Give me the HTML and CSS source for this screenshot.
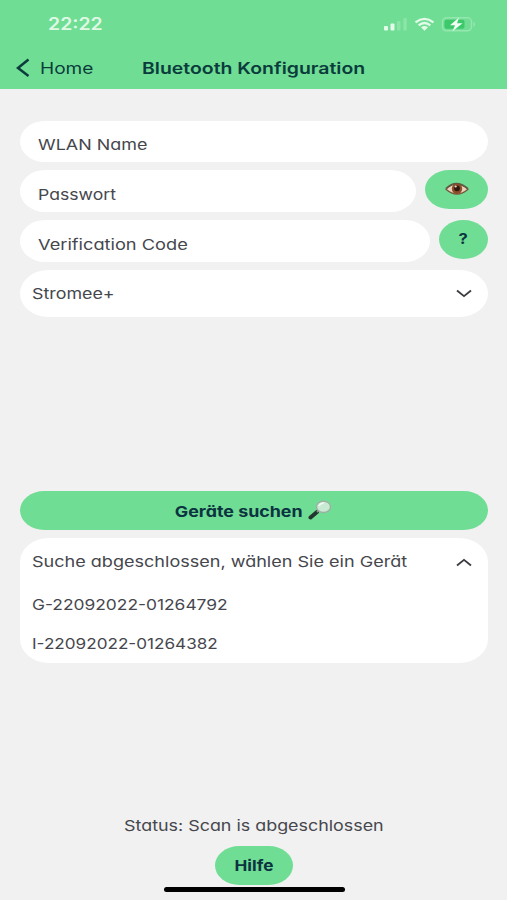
FILE: index.html
```html
<!DOCTYPE html>
<html lang="de">
<head>
<meta charset="utf-8">
<title>Bluetooth Konfiguration</title>
<link rel="stylesheet" href="styles.css">
</head>
<body>
<header class="top">
  <div class="statusbar">
    <span class="wide clock">22:22</span>
    <svg class="indicators" width="94" height="20" viewBox="0 0 94 20">
      <g fill="#e4fbe9"><rect x="1" y="12" width="4" height="4.500" rx="1"/><rect x="7.500" y="9.500" width="4" height="7" rx="1"/></g>
      <g fill="#8ae5a7"><rect x="14" y="7" width="3.500" height="9.500" rx="1"/><rect x="20.300" y="4" width="3.500" height="12.500" rx="1"/></g>
      <g fill="none" stroke="#e4fbe9" stroke-width="2.300"><path d="M32.500 8.300Q41.500 1.500 50.500 8.300"/><path d="M35.700 11.300Q41.500 6.800 47.300 11.300"/></g>
      <path d="M38 13.200Q41.500 10.600 45 13.200L41.500 16.700Z" fill="#e4fbe9"/>
      <rect x="59.500" y="3.800" width="29" height="13" rx="4" fill="none" stroke="#94e7ad" stroke-width="1.500"/>
      <path d="M90.500 7.500Q94 10.300 90.500 13Z" fill="#94e7ad"/>
      <rect x="61.500" y="5.800" width="20" height="9" rx="2" fill="#3dc96b"/>
      <path d="M76 3.500L67 11.200H72L69.500 17.300L79.500 9.200H74Z" fill="#effdf2"/>
    </svg>
  </div>
  <nav class="nav">
    <svg class="back" width="14" height="20" viewBox="0 0 14 20"><path d="M12.500 1.500L2 10L12.500 18" fill="none" stroke="#0b3c3c" stroke-width="2.500"/></svg>
    <span class="wide home">Home</span>
    <h1 class="wide title">Bluetooth Konfiguration</h1>
  </nav>
</header>
<main class="content">
  <div class="row"><div class="field"><span class="wide t-wlan">WLAN Name</span></div></div>
  <div class="row"><div class="field"><span class="wide t-pass">Passwort</span></div>
    <button class="btn eye">
      <svg width="24" height="16" viewBox="0 0 24 16">
        <path d="M1 8.200Q11-2 23 8.200Q12 18 1 8.200Z" fill="#e9d2bb" stroke="#75543d" stroke-width="1.200"/>
        <path d="M1 7.500Q11-2.500 23 7.500" fill="none" stroke="#5d5b45" stroke-width="1.500"/>
        <circle cx="12" cy="7.700" r="5.200" fill="#8b4c2a"/><circle cx="12" cy="7.300" r="2.900" fill="#30180f"/><circle cx="10.700" cy="5.500" r="1.100" fill="#e8ddd5"/>
      </svg>
    </button>
  </div>
  <div class="row"><div class="field"><span class="wide t-code">Verification Code</span></div>
    <button class="btn help"><span class="wide t-q">?</span></button>
  </div>
  <div class="select">
    <span class="wide t-stromee">Stromee+</span>
    <svg class="chevron" width="16" height="9" viewBox="0 0 16 9"><path d="M1 1.500L8 7.200L15 1.500" fill="none" stroke="#3a3b40" stroke-width="1.800"/></svg>
  </div>
  <button class="btn search">
    <span class="wide t-search">Geräte suchen</span>
    <svg class="lens" width="24" height="20" viewBox="0 0 24 20">
      <path d="M2.500 17.500L9 12" stroke="#24352e" stroke-width="4" stroke-linecap="round"/>
      <path d="M9 12L11.500 10" stroke="#87938c" stroke-width="2"/>
      <ellipse cx="15.500" cy="6.800" rx="7" ry="5.700" fill="#c8e9d2" stroke="#9eaca3" stroke-width="1.300"/>
      <path d="M11 6Q12.500 3 16 3" fill="none" stroke="#eefaf1" stroke-width="1.500"/>
    </svg>
  </button>
  <section class="devices">
    <div class="devices-head">
      <span class="wide t-done">Suche abgeschlossen, wählen Sie ein Gerät</span>
      <svg class="chevron" width="16" height="9" viewBox="0 0 16 9"><path d="M1 7.500L8 1.800L15 7.500" fill="none" stroke="#3a3b40" stroke-width="1.800"/></svg>
    </div>
    <div class="device"><span class="wide t-g">G-22092022-01264792</span></div>
    <div class="device"><span class="wide t-i">I-22092022-01264382</span></div>
  </section>
</main>
<footer class="foot">
  <p class="status"><span class="wide t-status">Status: Scan is abgeschlossen</span></p>
  <button class="btn hilfe"><span class="wide t-hilfe">Hilfe</span></button>
  <div class="home-bar"></div>
</footer>
</body>
</html>
```
FILE: styles.css
```css
* { box-sizing: border-box; }
body {
  margin: 0;
  width: 507px;
  height: 900px;
  overflow: hidden;
  display: flex;
  flex-direction: column;
  background: #f1f1f1;
  color: #46474d;
  font: 15px/20px Inter, "Liberation Sans", sans-serif;
  font-feature-settings: "cv11";
}
.wide {
  display: inline-block;
  white-space: nowrap;
  transform-origin: left center;
  transform: scaleX(var(--sx, 1.2));
}
.top { height: 89px; background: #70dd95; color: #0b3c3c; }
.statusbar {
  height: 48px;
  padding: 14px 30px 0 48px;
  display: flex;
  justify-content: space-between;
}
.clock { color: #dff9e3; font-size: 17px; font-weight: 600; line-height: 21px; font-feature-settings: normal; --sx: 1.145; }
.nav { height: 40px; display: flex; align-items: center; padding-left: 16px; }
.home { margin-left: 10px; width: 102px; font-size: 16px; font-feature-settings: normal; --sx: 1.19; }
.title { margin: 0; font-size: 16px; font-weight: 600; font-feature-settings: normal; --sx: 1.215; }
.content { height: 574px; padding: 32px 19px 0 20px; display: flex; flex-direction: column; }
.row { display: flex; gap: 9px; height: 42px; margin-bottom: 8px; align-items: flex-start; }
.row:first-child { height: 41px; }
.field { flex: 1; height: 100%; background: #fff; border-radius: 25px / 21px; padding: 14px 18px 0; }
.row + .row .field { padding-top: 15px; }
.t-wlan { --sx: 1.195; }
.t-pass { --sx: 1.175; }
.t-code { --sx: 1.215; }
.t-stromee { --sx: 1.19; }
.btn {
  border: 0;
  padding: 0;
  display: flex;
  align-items: center;
  justify-content: center;
  background: #70dd95;
  color: #0b3440;
  font: inherit;
  font-weight: 700;
  height: 39px;
  border-radius: 25px / 20px;
}
.btn .wide { transform-origin: center; }
.eye { width: 63px; }
.help { width: 49px; }
.t-q { --sx: 1.1; }
.select {
  height: 48px;
  background: #fff;
  border-radius: 29px / 24px;
  padding: 0 16px 0 12px;
  display: flex;
  align-items: center;
  justify-content: space-between;
}
.search { margin-top: 174px; position: relative; }
.t-search { margin: 2px 31px 0 0; --sx: 1.19; }
.lens { position: absolute; left: 288px; top: 9px; }
.devices { margin-top: 8px; height: 125px; background: #fff; border-radius: 29px / 24px; padding: 14px 16px 0 12px; }
.devices-head { height: 20px; display: flex; justify-content: space-between; align-items: center; }
.t-done { --sx: 1.203; }
.device { height: 39px; padding-top: 23px; }
.t-g { --sx: 1.158; }
.t-i { --sx: 1.142; }
.foot { flex: 1; display: flex; flex-direction: column; align-items: center; padding-top: 153px; }
.status { margin: 0; height: 30px; }
.status .wide { transform-origin: center; --sx: 1.192; }
.hilfe { width: 78px; }
.t-hilfe { --sx: 1.145; }
.home-bar { width: 181px; height: 5px; margin: 2px 0 0 1px; border-radius: 3px; background: #000; }
```
